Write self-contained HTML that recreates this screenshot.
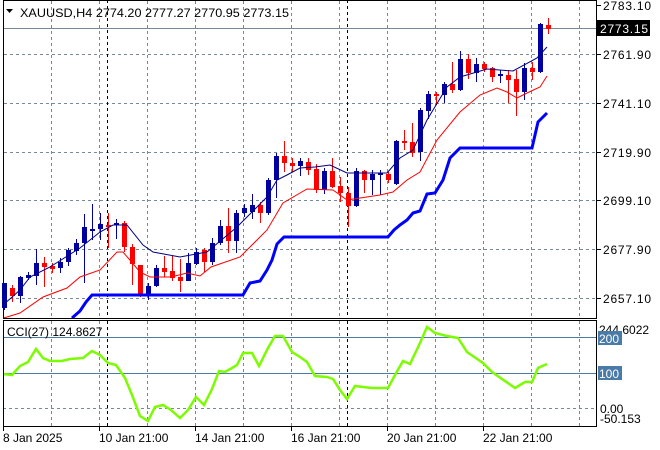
<!DOCTYPE html>
<html><head><meta charset="utf-8"><style>
html,body{margin:0;padding:0;background:#fff;width:660px;height:450px;overflow:hidden}
svg{display:block;font-family:"Liberation Sans","DejaVu Sans",sans-serif;font-size:12px}
</style></head><body>
<svg id="s" width="660" height="450" xmlns="http://www.w3.org/2000/svg">
<rect width="660" height="450" fill="#fff"/>
<g id="grid" stroke="#778899" stroke-width="1" stroke-dasharray="3,3" fill="none"></g>
<line x1="3" y1="28.5" x2="596" y2="28.5" stroke="#778899"/>
<line x1="107.5" y1="0" x2="107.5" y2="318" stroke="#000" stroke-dasharray="3,3"/>
<line x1="347.5" y1="0" x2="347.5" y2="318" stroke="#000" stroke-dasharray="3,3"/>
<line x1="107.5" y1="321" x2="107.5" y2="426" stroke="#000" stroke-dasharray="3,3"/>
<line x1="347.5" y1="321" x2="347.5" y2="426" stroke="#000" stroke-dasharray="3,3"/>
<line x1="3" y1="337.5" x2="596" y2="337.5" stroke="#4a7aa8"/>
<line x1="3" y1="373.5" x2="596" y2="373.5" stroke="#4a7aa8"/>
<line x1="3" y1="408.5" x2="596" y2="408.5" stroke="#778899" stroke-dasharray="3,3"/>
<g id="c"></g>
<polyline fill="none" stroke="#000080" stroke-width="1" points="3,305 20,290 30,277 50,267 80,248 100,232 113,225 127,225 143,245 153,252 180,257 207,252 237,227 267,197 277,180 287,175 300,168 315,167 330,165 347,173 387,173 400,158 413,150 427,120 447,87 460,77 487,69 513,71 537,58 547,47"/>
<polyline fill="none" stroke="#ff0000" stroke-width="1" points="3,318 7,317 20,313 43,297 67,288 80,277 100,270 117,252 123,252 140,272 150,277 171,277 187,273 200,276 211,267 240,257 267,230 283,203 307,189 333,190 347,200 360,198 380,195 393,192 407,180 420,172 437,140 460,112 480,95 497,88 507,92 517,98 527,93 540,87 547,76"/>
<polyline fill="none" stroke="#0000ff" stroke-width="3" points="72,318 80,311 86,302 92,295 243,295 250,283 260,281 267,270 272,260 277,244 284,237 388,237 394,230 400,225 407,220 413,213 420,211 427,194 435,193 443,180 450,158 460,148 532,148 535,135 538,122 547,113"/>
<polyline fill="none" stroke="#7cfc00" stroke-width="2.5" points="3,374 12,375 20,366 28,362 36,349 43,358 50,361 62,361 70,359 83,358 92,351 100,355 108,363 116,365 125,378 132,395 140,416 148,421 155,407 163,405 171,410 180,418 188,410 196,397 204,405 212,389 219,371 225,372 232,368 237,365 243,353 252,353 259,366 268,348 275,336 283,336 292,352 300,357 307,362 315,376 327,377 333,379 340,390 347,399 355,386 363,387 372,388 388,388 395,375 403,361 410,364 420,343 427,327 435,333 447,336 458,338 467,352 483,363 492,372 515,388 525,382 532,382 538,368 547,364"/>
<rect x="3.5" y="0.5" width="593" height="318" fill="none" stroke="#000"/>
<rect x="3.5" y="320.5" width="593" height="106" fill="none" stroke="#000"/>
<g id="ticks" stroke="#000"></g>
<polygon points="6,9 13,9 9.5,13" fill="#000"/>
<text x="20" y="17" fill="#000" textLength="269" lengthAdjust="spacingAndGlyphs">XAUUSD,H4  2774.20 2777.27 2770.95 2773.15</text>
<text x="7" y="336" fill="#000">CCI(27) 124.8627</text>
<g fill="#000">
<text x="603" y="10" textLength="48">2783.10</text>
<text x="603" y="59" textLength="48">2761.90</text>
<text x="603" y="108" textLength="48">2741.10</text>
<text x="603" y="157" textLength="48">2719.90</text>
<text x="603" y="205" textLength="48">2699.10</text>
<text x="603" y="254" textLength="48">2677.90</text>
<text x="603" y="303" textLength="48">2657.10</text>
</g>
<rect x="597" y="20" width="53" height="16" fill="#000"/>
<text x="600" y="33" fill="#fff" textLength="48">2773.15</text>
<text x="599" y="334" fill="#000">244.6022</text>
<rect x="598" y="331" width="24" height="14" fill="#4a7aa8"/>
<text x="599" y="343" fill="#fff">200</text>
<rect x="598" y="366" width="24" height="14" fill="#4a7aa8"/>
<text x="599" y="378" fill="#fff">100</text>
<text x="600" y="413" fill="#000">0.00</text>
<text x="600" y="423" fill="#000">-50.153</text>
<g fill="#000">
<text x="3" y="442">8 Jan 2025</text>
<text x="99" y="442">10 Jan 21:00</text>
<text x="195" y="442">14 Jan 21:00</text>
<text x="291" y="442">16 Jan 21:00</text>
<text x="387" y="442">20 Jan 21:00</text>
<text x="483" y="442">22 Jan 21:00</text>
</g>
</svg>
<script>
var NS="http://www.w3.org/2000/svg";
function el(p,t,a){var e=document.createElementNS(NS,t);for(var k in a)e.setAttribute(k,a[k]);p.appendChild(e);return e;}
var g=document.getElementById('grid');
for(var x=51;x<596;x+=48){el(g,'line',{x1:x+.5,y1:1,x2:x+.5,y2:318});el(g,'line',{x1:x+.5,y1:321,x2:x+.5,y2:426});}
[54,103,152,200,249,298].forEach(function(y){el(g,'line',{x1:4,y1:y+.5,x2:596,y2:y+.5});});
var t=document.getElementById('ticks');
[5,54,103,152,200,249,298,28].forEach(function(y){el(t,'line',{x1:597,y1:y+.5,x2:601,y2:y+.5});});
[3,99,195,291,387,483].forEach(function(x){el(t,'line',{x1:x+.5,y1:427,x2:x+.5,y2:431});});
var d=[["b",283,308,283,310],["r",288,296,285,302],["b",277,296,276,303],["b",275,278,272,280],["b",263,276,249,285],["r",263,267,257,287],["r",266,269,263,273],["b",262,268,258,273],["b",250,262,248,266],["b",243,251,239,255],["b",227,243,214,283],["b",229,231,204,240],["b",224,229,213,240],["r",225,226,213,248],["b",223,225,219,239],["r",223,247,221,252],["r",247,264,244,285],["r",265,295,265,297],["b",286,294,283,300],["b",268,286,265,287],["r",268,272,256,277],["r",271,278,256,281],["r",277,281,259,292],["b",263,281,253,281],["b",252,264,248,265],["r",250,262,248,272],["b",243,262,238,265],["b",226,243,220,245],["r",226,241,208,253],["b",213,241,210,253],["b",208,213,204,217],["b",205,212,194,219],["r",205,213,202,223],["b",180,213,178,215],["b",156,180,153,198],["r",156,163,141,172],["r",163,166,158,172],["b",161,166,158,176],["r",162,170,158,175],["r",169,190,164,193],["b",171,190,168,194],["r",171,187,158,188],["r",186,193,177,202],["r",193,206,187,227],["b",171,206,168,207],["r",171,180,170,193],["b",174,180,170,195],["b",173,175,170,195],["r",174,180,172,183],["b",141,184,140,185],["r",141,143,130,150],["r",142,153,123,157],["b",110,152,108,161],["b",94,111,91,119],["r",94,96,92,105],["b",84,95,82,103],["r",84,90,62,93],["b",59,90,51,91],["r",59,73,54,79],["b",64,73,58,82],["r",64,69,62,72],["r",68,77,67,82],["b",74,76,70,83],["r",75,80,70,103],["r",79,92,70,116],["b",68,92,63,100],["r",68,72,62,80],["b",24,72,23,73],["r",25,29,18,34]];
var c=document.getElementById('c');
d.forEach(function(k,i){var x=4+8*i;var col=k[0]=="b"?"#0000a0":"#ff0000";
el(c,'rect',{x:x,y:k[3],width:1,height:k[4]-k[3],fill:col});
el(c,'rect',{x:x-2,y:k[1],width:5,height:Math.max(2,k[2]-k[1]),fill:col});});
</script>
</body></html>
